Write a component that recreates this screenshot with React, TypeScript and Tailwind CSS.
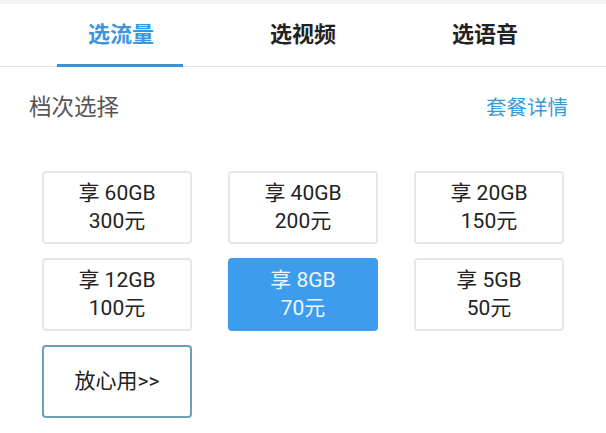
const tabs = ['选流量', '选视频', '选语音'];

const plans = [
  { gb: '60GB', price: '300元' },
  { gb: '40GB', price: '200元' },
  { gb: '20GB', price: '150元' },
  { gb: '12GB', price: '100元' },
  { gb: '8GB', price: '70元', active: true },
  { gb: '5GB', price: '50元' },
];

export default function App() {
  return (
    <div className="w-[606px] h-[433px] bg-white overflow-hidden" style={{ fontFamily: 'Roboto, "Noto Sans CJK SC", sans-serif' }}>
      <div className="h-[4px] bg-[#f2f2f2]" />
      <div className="flex px-[30px] h-[63px] border-b border-[#e2e2e2]">
        {tabs.map((t, i) => (
          <div key={t} className="flex-1 relative flex items-center justify-center">
            <span className={`text-[22px] font-bold pb-[2px] ${i === 0 ? 'text-[#3a96dd]' : 'text-[#222]'}`}>{t}</span>
            {i === 0 && <div className="absolute bottom-[-1px] left-[27px] w-[126px] h-[3px] bg-[#3d8fd6]" />}
          </div>
        ))}
      </div>
      <div className="flex justify-between items-center pl-[29px] pr-[38px] pt-[24px]">
        <span className="text-[22.5px] text-[#555]">档次选择</span>
        <span className="text-[20.5px] text-[#3a9ad9]">套餐详情</span>
      </div>
      <div className="grid grid-cols-[150px_150px_150px] gap-x-[36px] gap-y-[14px] pl-[42px] pt-[46px]">
        {plans.map((p) => (
          <div
            key={p.gb}
            className={`h-[73px] rounded-[4px] flex flex-col items-center justify-center text-[21px] leading-[28px] ${
              p.active ? 'bg-[#3d9cee] text-[#eef7ff]' : 'border-2 border-[#e6e6e6] text-[#222]'
            }`}
          >
            <span>享 {p.gb}</span>
            <span>{p.price}</span>
          </div>
        ))}
        <div className="h-[73px] rounded-[4px] border-2 border-[#6d9fb6] flex items-center justify-center text-[21px] text-[#222]">
          放心用&gt;&gt;
        </div>
      </div>
    </div>
  );
}
